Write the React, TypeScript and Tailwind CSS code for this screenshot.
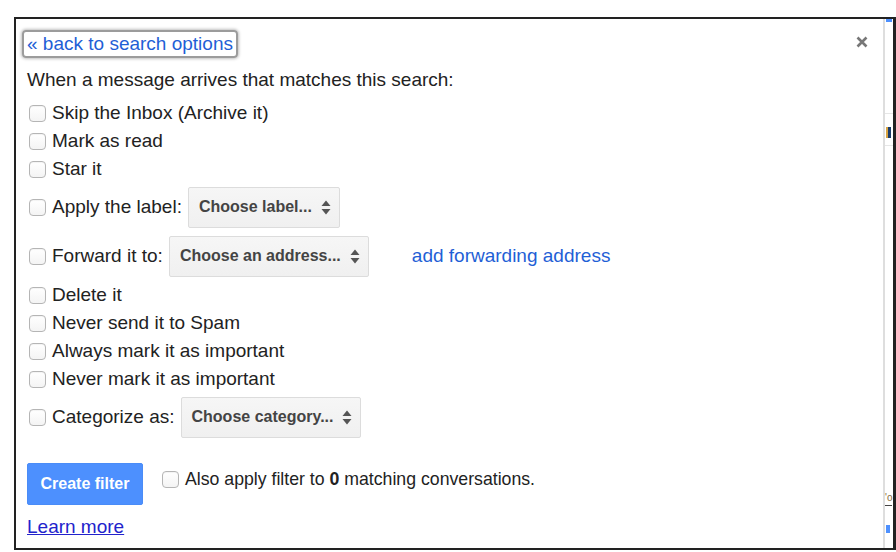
import React from "react";

function Checkbox() {
  return (
    <span className="inline-block h-[17px] w-[17px] shrink-0 rounded-[4px] border border-[#b5b5b5] bg-gradient-to-b from-white to-[#f4f4f4] shadow-[inset_0_1px_1px_rgba(0,0,0,0.05)]" />
  );
}

function Arrows() {
  return (
    <svg width="10" height="15" viewBox="0 0 10 15" className="shrink-0">
      <path d="M5 0.5 L9.5 6 L0.5 6 Z" fill="#555" />
      <path d="M0.5 9 L9.5 9 L5 14.5 Z" fill="#555" />
    </svg>
  );
}

function Select({ label }: { label: string }) {
  return (
    <div className="ml-[6px] flex h-[41px] items-center gap-[9px] rounded-[2px] border border-[#dcdcdc] bg-gradient-to-b from-[#f6f6f6] to-[#f0f0f0] pl-[10px] pr-[8px] text-[16px] font-bold text-[#444]">
      <span>{label}</span>
      <Arrows />
    </div>
  );
}

function CheckRow({ label, h = "h-[28px]", children }: { label: string; h?: string; children?: React.ReactNode }) {
  return (
    <div className={`flex ${h} items-center`}>
      <span className="ml-[2px] mr-[6px] flex">
        <Checkbox />
      </span>
      <span>{label}</span>
      {children}
    </div>
  );
}

export default function App() {
  return (
    <div
      className="h-[552px] w-[896px] overflow-hidden bg-white pl-[14px] pt-[17px]"
      style={{ fontFamily: '"Liberation Sans", Arial, sans-serif' }}
    >
      <div className="flex h-[533px] w-[882px] border-2 border-r-[3px] border-[#222]">
        {/* dialog */}
        <div className="relative flex-1 pl-[11px] text-[19px] text-[#222]">
          <svg width="12" height="12" viewBox="0 0 12 12" className="absolute right-[15px] top-[17px]">
            <path d="M1.5 1.5 L10.5 10.5 M10.5 1.5 L1.5 10.5" stroke="#777" strokeWidth="2.6" />
          </svg>

          <div className="mt-[11px] ml-[-5px] inline-flex h-[28px] items-center rounded-[4px] border-2 border-[#9c9c9c] px-[3px] shadow-[0_0_3px_1px_rgba(0,0,0,0.25)]">
            <span className="text-[#1f5fd6]">« back to search options</span>
          </div>

          <div className="mt-[8px] flex h-[28px] items-center">When a message arrives that matches this search:</div>

          <div className="mt-[5px]">
            <CheckRow label="Skip the Inbox (Archive it)" />
          </div>
          <CheckRow label="Mark as read" />
          <CheckRow label="Star it" />
          <CheckRow label="Apply the label:" h="h-[48px]">
            <Select label="Choose label..." />
          </CheckRow>
          <CheckRow label="Forward it to:" h="h-[50px]">
            <Select label="Choose an address..." />
            <span className="ml-[43px] text-[#1f5fd6]">add forwarding address</span>
          </CheckRow>
          <CheckRow label="Delete it" />
          <CheckRow label="Never send it to Spam" />
          <CheckRow label="Always mark it as important" />
          <CheckRow label="Never mark it as important" />
          <CheckRow label="Categorize as:" h="h-[48px]">
            <Select label="Choose category..." />
          </CheckRow>

          <div className="mt-[22px] flex items-start">
            <button className="flex h-[42px] w-[116px] items-center justify-center rounded-[2px] border border-[#4a8cf7] bg-[#4d90fe] text-[16px] font-bold text-white">
              Create filter
            </button>
            <div className="ml-[19px] mt-[2px] flex h-[28px] items-center">
              <span className="mr-[6px] flex">
                <Checkbox />
              </span>
              <span className="text-[17.7px]">
                Also apply filter to <b>0</b> matching conversations.
              </span>
            </div>
          </div>

          <div className="mt-[11px] leading-[22px]">
            <span className="text-[#2222cc] underline">Learn more</span>
          </div>
        </div>

        {/* gmail page peeking out behind */}
        <div className="relative w-[10px] border-l-2 border-[#dedede] bg-white">
          <div className="absolute left-[1px] top-0 h-[3px] w-[6px] bg-[#4d90fe]" />
          <div className="absolute left-0 top-[94px] h-px w-full bg-[#e6e6e6]" />
          <div className="absolute left-0 top-[126px] h-px w-full bg-[#e6e6e6]" />
          <div className="absolute left-[1px] top-[108px] h-[11px] w-[2px] bg-[#d9a441]" />
          <div className="absolute left-[3px] top-[108px] h-[11px] w-[3px] bg-[#1b3c6b]" />
          <div className="absolute left-0 top-[474px] h-[10px] w-[6px] text-[10px] leading-[10px] text-[#8a6d3b]">'o</div>
          <div className="absolute left-0 top-[486px] h-px w-[7px] bg-[#444]" />
          <div className="absolute left-[1px] top-[506px] h-[8px] w-[4px] bg-[#4d90fe]" />
        </div>
      </div>
    </div>
  );
}
